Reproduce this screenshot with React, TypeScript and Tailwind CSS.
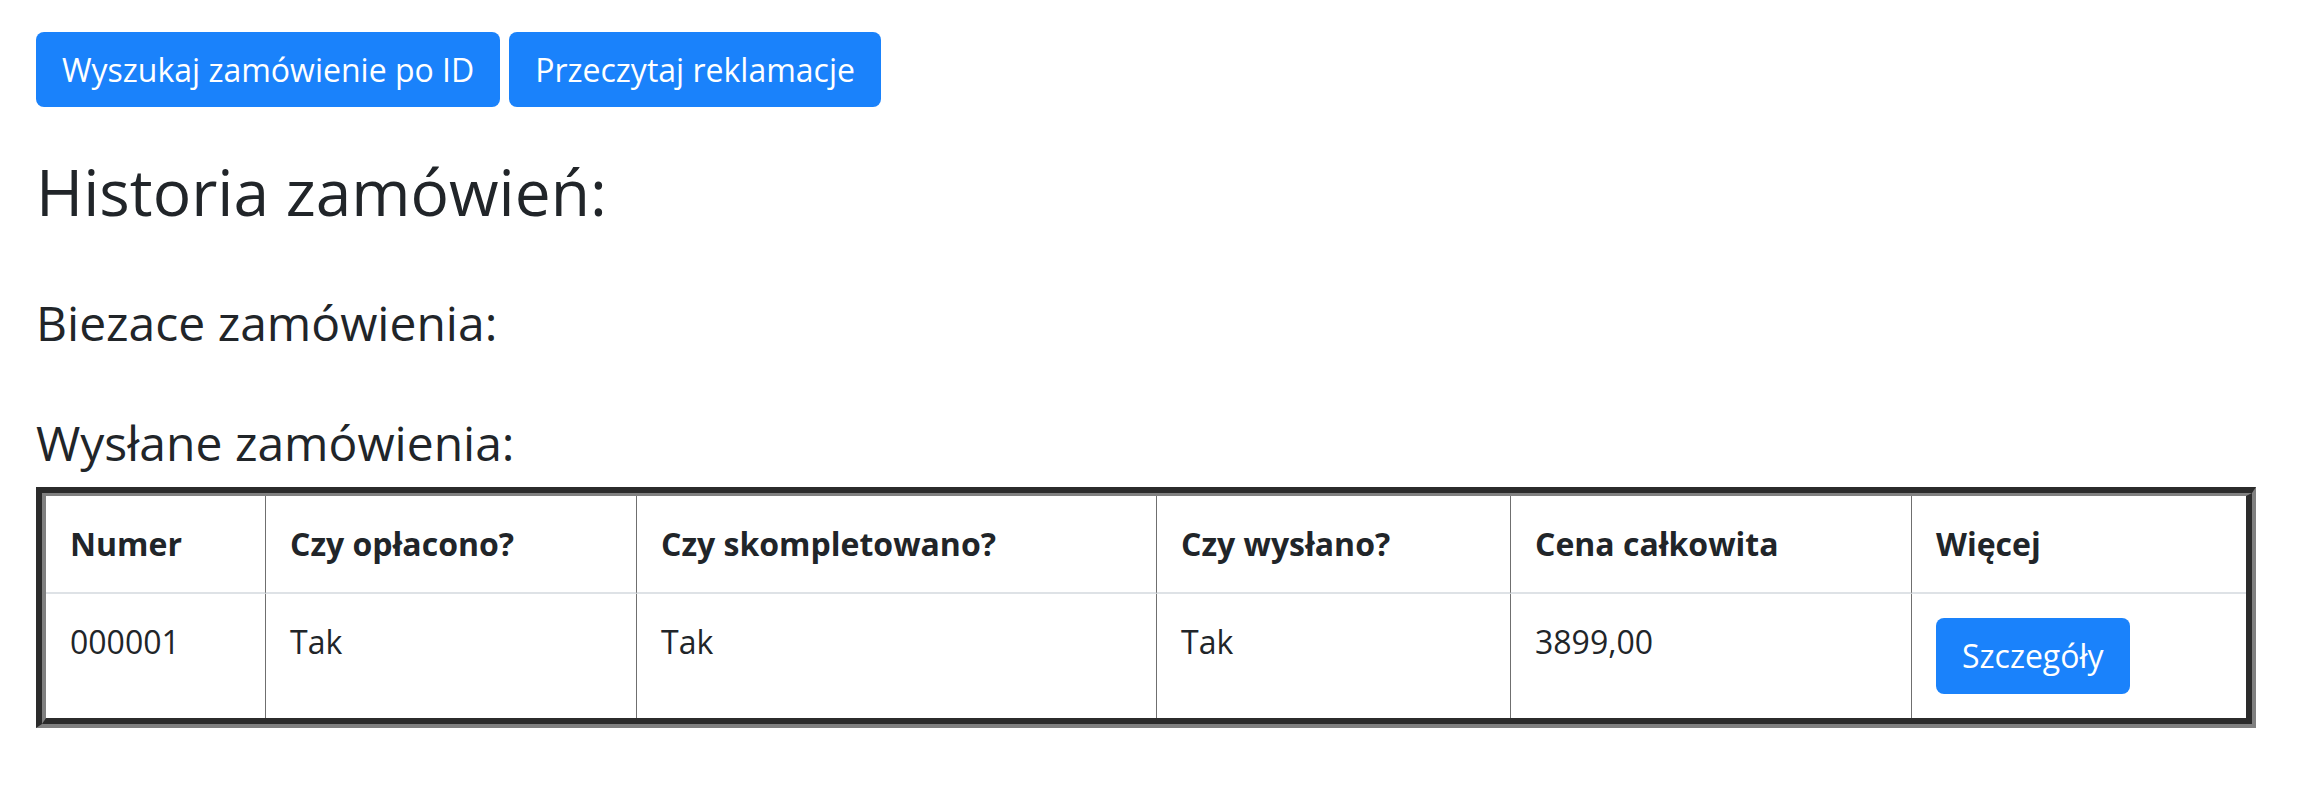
import React from "react";

type Order = {
  numer: string;
  oplacono: string;
  skompletowano: string;
  wyslano: string;
  cena: string;
};

const sentOrders: Order[] = [
  { numer: "000001", oplacono: "Tak", skompletowano: "Tak", wyslano: "Tak", cena: "3899,00" },
];

const columns = [
  { label: "Numer", width: "w-[219px]" },
  { label: "Czy opłacono?", width: "w-[371px]" },
  { label: "Czy skompletowano?", width: "w-[520px]" },
  { label: "Czy wysłano?", width: "w-[354px]" },
  { label: "Cena całkowita", width: "w-[401px]" },
  { label: "Więcej", width: "w-[335px]" },
];

function BlueButton({ children, className = "" }: { children: React.ReactNode; className?: string }) {
  return (
    <button
      type="button"
      className={`inline-flex h-[75px] items-center whitespace-nowrap rounded-[8px] bg-[#1a82fb] px-[26px] text-[32px] leading-[48px] text-white ${className}`}
    >
      {children}
    </button>
  );
}

export default function App() {
  return (
    <div className="min-h-screen bg-white px-[36px] pt-[32px] font-['Open_Sans','Noto_Sans',sans-serif] text-[#212529]">
      {/* ── top actions ── */}
      <div className="flex gap-[9px]">
        <BlueButton>Wyszukaj zamówienie po ID</BlueButton>
        <BlueButton className="px-[25px]">Przeczytaj reklamacje</BlueButton>
      </div>

      <h2 className="mt-[47px] text-[64px] font-normal leading-[1.2]">Historia zamówień:</h2>

      <h4 className="mt-[63px] text-[48px] font-normal leading-[1.2]">Biezace zamówienia:</h4>

      <h4 className="mt-[63px] text-[48px] font-normal leading-[1.2]">Wysłane zamówienia:</h4>

      {/* ── sent orders table ── */}
      <div className="mt-[15px] w-[2220px] border-t-[6px] border-r-[4px] border-b-[4px] border-l-[6px] border-t-[#2b2b2b] border-r-[#808080] border-b-[#808080] border-l-[#2b2b2b]">
        <table className="w-full table-fixed border-separate border-spacing-0 border-t-[3px] border-r-[6px] border-b-[6px] border-l-[4px] border-t-[#808080] border-r-[#2b2b2b] border-b-[#2b2b2b] border-l-[#808080] text-[32px] leading-[48px]">
          <colgroup>
            {columns.map((c) => (
              <col key={c.label} className={c.width} />
            ))}
          </colgroup>
          <thead>
            <tr>
              {columns.map((c, i) => (
                <th
                  key={c.label}
                  className={`border-b-2 border-b-[#dee2e6] p-[24px] text-left align-top font-bold ${
                    i > 0 ? "border-l border-l-[#6f6f6f]" : ""
                  }`}
                >
                  {c.label}
                </th>
              ))}
            </tr>
          </thead>
          <tbody>
            {sentOrders.map((o) => (
              <tr key={o.numer}>
                <td className="p-[24px] align-top">{o.numer}</td>
                <td className="border-l border-l-[#6f6f6f] p-[24px] align-top">{o.oplacono}</td>
                <td className="border-l border-l-[#6f6f6f] p-[24px] align-top">{o.skompletowano}</td>
                <td className="border-l border-l-[#6f6f6f] p-[24px] align-top">{o.wyslano}</td>
                <td className="border-l border-l-[#6f6f6f] p-[24px] align-top">{o.cena}</td>
                <td className="border-l border-l-[#6f6f6f] p-[24px] align-top">
                  <BlueButton className="h-[76px]">Szczegóły</BlueButton>
                </td>
              </tr>
            ))}
          </tbody>
        </table>
      </div>
    </div>
  );
}
